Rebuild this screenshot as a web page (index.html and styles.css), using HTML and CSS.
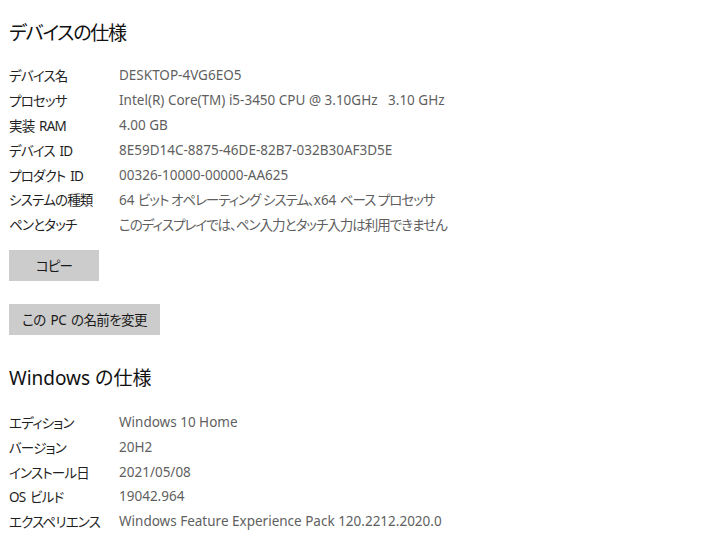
FILE: index.html
```html
<!DOCTYPE html>
<html lang="ja">
<head>
<meta charset="utf-8">
<link rel="stylesheet" href="styles.css">
</head>
<body>
<main class="page">
  <section class="section">
    <h1 class="title title-device">デバイスの仕様</h1>
    <dl class="specs">
      <div class="row"><dt>デバイス名</dt><dd>DESKTOP-4VG6EO5</dd></div>
      <div class="row"><dt>プロセッサ</dt><dd>Intel(R) Core(TM) i5-3450 CPU @ 3.10GHz&nbsp;&nbsp;&nbsp;3.10 GHz</dd></div>
      <div class="row"><dt>実装 RAM</dt><dd>4.00 GB</dd></div>
      <div class="row"><dt>デバイス ID</dt><dd>8E59D14C-8875-46DE-82B7-032B30AF3D5E</dd></div>
      <div class="row"><dt>プロダクト ID</dt><dd>00326-10000-00000-AA625</dd></div>
      <div class="row"><dt>システムの種類</dt><dd>64 <span class="ja">ビット オペレーティング システム、</span>x64 <span class="ja">ベース プロセッサ</span></dd></div>
      <div class="row"><dt>ペンとタッチ</dt><dd><span class="ja">このディスプレイでは、ペン入力とタッチ入力は利用できません</span></dd></div>
    </dl>
    <div class="actions">
      <button class="btn btn-copy">コピー</button>
      <button class="btn btn-rename">この PC の名前を変更</button>
    </div>
  </section>
  <section class="section section-win">
    <h2 class="title">Windows の仕様</h2>
    <dl class="specs specs-win">
      <div class="row"><dt>エディション</dt><dd>Windows 10 Home</dd></div>
      <div class="row"><dt>バージョン</dt><dd>20H2</dd></div>
      <div class="row"><dt>インストール日</dt><dd>2021/05/08</dd></div>
      <div class="row"><dt>OS ビルド</dt><dd>19042.964</dd></div>
      <div class="row"><dt>エクスペリエンス</dt><dd>Windows Feature Experience Pack 120.2212.2020.0</dd></div>
    </dl>
  </section>
</main>
</body>
</html>
```
FILE: styles.css
```css
html, body {
  margin: 0;
  padding: 0;
  background: #ffffff;
}
body {
  font-family: "Noto Sans", "Noto Sans CJK JP", sans-serif;
  font-feature-settings: "palt";
  color: #1a1a1a;
}
.page {
  padding: 19px 0 0 9px;
}
.title {
  margin: 0;
  font-size: 19px;
  font-weight: 400;
  line-height: 28px;
  color: #111;
}
.title-device {
  letter-spacing: -1.2px;
}
.specs {
  margin: 16px 0 0 0;
  padding: 0;
}
.specs-win {
  margin-top: 18px;
}
.row {
  display: flex;
  height: 24.8px;
  align-items: center;
  font-size: 13.5px;
}
.row dt {
  width: 110px;
  flex: none;
  color: #1f1f1f;
  letter-spacing: -0.8px;
  word-spacing: 2px;
}
.row dd {
  margin: 0;
  color: #5f5f5f;
}
.ja {
  letter-spacing: -1px;
}
.actions {
  display: flex;
  flex-direction: column;
  align-items: flex-start;
  gap: 23px;
  margin-top: 13px;
}
.btn {
  font: inherit;
  font-size: 13.5px;
  height: 31px;
  border: 0;
  background: #cccccc;
  color: #1a1a1a;
  padding: 0;
  white-space: nowrap;
  text-align: center;
}
.btn-copy {
  width: 90px;
  letter-spacing: -0.8px;
}
.btn-rename {
  width: 151px;
  letter-spacing: -0.6px;
  word-spacing: 2px;
}
.section-win {
  margin-top: 29px;
}
```
